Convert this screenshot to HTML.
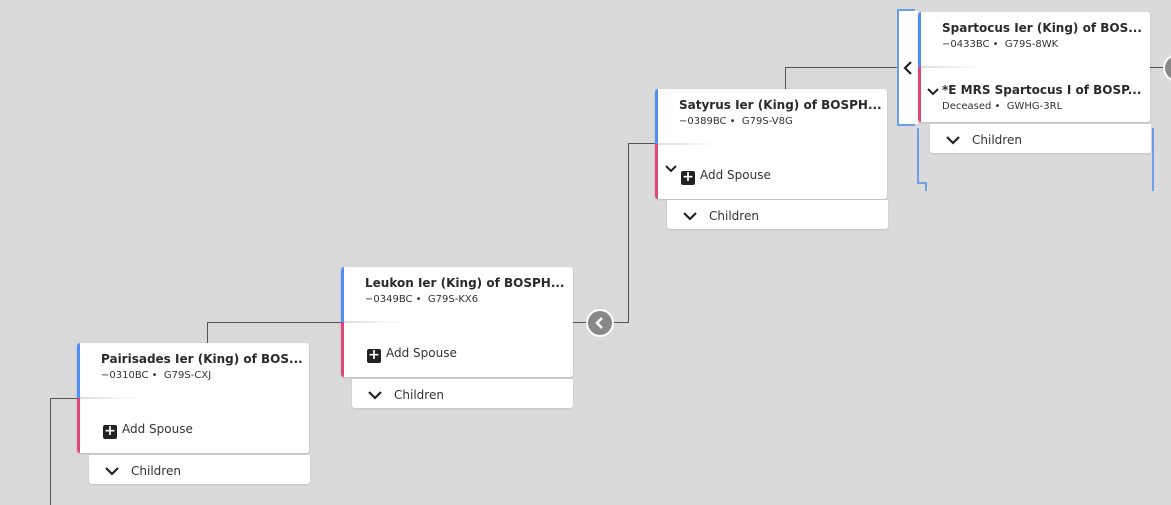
<!DOCTYPE html>
<html><head><style>
body{margin:0;width:1171px;height:505px;background:#dadada;position:relative;overflow:hidden;font-family:"DejaVu Sans","Liberation Sans",sans-serif;color:#333}
.a{position:absolute}
.card{position:absolute;width:232px;height:110px;background:#fff;border-radius:3px;box-shadow:0 1px 2px rgba(0,0,0,.15)}
.card .b{position:absolute;left:0;top:0;width:3px;height:55px;background:#4d8ff5;border-radius:3px 0 0 0}
.card .p{position:absolute;left:0;top:55px;width:3px;height:55px;background:#e0457b;border-radius:0 0 0 3px}
.card .sep{position:absolute;left:3px;top:54px;width:60px;height:2px;background:linear-gradient(90deg,#ddd,#fff)}
.nm{position:absolute;left:24px;top:9px;font-size:12px;font-weight:bold;color:#2a2a2a;white-space:nowrap}
.sub{position:absolute;left:24px;top:27px;font-size:10px;color:#333;white-space:nowrap}
.add{position:absolute;left:26px;top:79px;font-size:12px;white-space:nowrap}
.plus{display:inline-block;width:14px;height:14px;background:#222;color:#fff;border-radius:2px;font-size:14px;line-height:13px;text-align:center;font-weight:bold;vertical-align:-2px;margin-right:5px}
.ch{position:absolute;width:221px;height:29px;background:#fff;border-radius:0 0 3px 3px;font-size:12px;box-shadow:0 1px 2px rgba(0,0,0,.1)}
.ch svg{position:absolute;left:16px;top:12px}
.ch span{position:absolute;left:42px;top:9px}
.ln{position:absolute;background:#555}
.circ{position:absolute;width:24px;height:24px;border-radius:50%;background:#888;border:2px solid #fff;box-sizing:content-box}
.bl{position:absolute;background:#6d9ee8}
</style></head><body>
<div class="ln" style="left:50px;top:398px;width:1px;height:107px"></div>
<div class="ln" style="left:50px;top:398px;width:28px;height:1px"></div>
<div class="ln" style="left:207px;top:322px;width:1px;height:22px"></div>
<div class="ln" style="left:207px;top:322px;width:135px;height:1px"></div>
<div class="ln" style="left:573px;top:322px;width:55px;height:1px"></div>
<div class="ln" style="left:628px;top:143px;width:1px;height:180px"></div>
<div class="ln" style="left:628px;top:143px;width:28px;height:1px"></div>
<div class="ln" style="left:785px;top:67px;width:1px;height:23px"></div>
<div class="ln" style="left:785px;top:67px;width:114px;height:1px"></div>
<div class="ln" style="left:1150px;top:67px;width:20px;height:1px"></div>

<div class="circ" style="left:586px;top:309px"><svg width="24" height="24"><path d="M14 7 L9 12 L14 17" stroke="#fff" stroke-width="2.5" fill="none"/></svg></div>
<div class="circ" style="left:1163px;top:54px"></div>

<div class="bl" style="left:897px;top:9px;width:2px;height:117px"></div>
<div class="bl" style="left:897px;top:9px;width:18px;height:2px"></div>
<div class="bl" style="left:897px;top:124px;width:18px;height:2px"></div>
<div class="a" style="left:899px;top:11px;width:19px;height:113px;background:#fff"></div>
<svg class="a" style="left:902px;top:60px" width="12" height="16"><path d="M9 2 L3 8 L9 14" stroke="#222" stroke-width="2.2" fill="none"/></svg>
<div class="bl" style="left:917px;top:128px;width:2px;height:56px"></div>
<div class="bl" style="left:917px;top:182px;width:10px;height:2px"></div>
<div class="bl" style="left:925px;top:182px;width:2px;height:9px"></div>
<div class="bl" style="left:1152px;top:128px;width:2px;height:63px"></div>

<div class="card" style="left:77px;top:343px"><div class="b"></div><div class="p"></div><div class="sep"></div>
<div class="nm">Pairisades Ier (King) of BOS...</div><div class="sub">−0310BC •&nbsp; G79S-CXJ</div>
<div class="add"><span class="plus">+</span>Add Spouse</div></div>
<div class="ch" style="left:89px;top:455px"><svg width="14" height="9"><path d="M1 1 L7 7 L13 1" stroke="#222" stroke-width="2.2" fill="none"/></svg><span>Children</span></div>

<div class="card" style="left:341px;top:267px"><div class="b"></div><div class="p"></div><div class="sep"></div>
<div class="nm">Leukon Ier (King) of BOSPH...</div><div class="sub">−0349BC •&nbsp; G79S-KX6</div>
<div class="add"><span class="plus">+</span>Add Spouse</div></div>
<div class="ch" style="left:352px;top:379px"><svg width="14" height="9"><path d="M1 1 L7 7 L13 1" stroke="#222" stroke-width="2.2" fill="none"/></svg><span>Children</span></div>

<div class="card" style="left:655px;top:89px"><div class="b"></div><div class="p"></div><div class="sep"></div>
<div class="nm">Satyrus Ier (King) of BOSPH...</div><div class="sub">−0389BC •&nbsp; G79S-V8G</div>
<svg class="a" style="left:10px;top:76px" width="12" height="8"><path d="M1 1 L6 6 L11 1" stroke="#222" stroke-width="2" fill="none"/></svg>
<div class="add"><span class="plus">+</span>Add Spouse</div></div>
<div class="ch" style="left:667px;top:200px"><svg width="14" height="9"><path d="M1 1 L7 7 L13 1" stroke="#222" stroke-width="2.2" fill="none"/></svg><span>Children</span></div>

<div class="card" style="left:918px;top:12px"><div class="b"></div><div class="p"></div><div class="sep"></div>
<div class="nm">Spartocus Ier (King) of BOS...</div><div class="sub">−0433BC •&nbsp; G79S-8WK</div>
<svg class="a" style="left:9px;top:76px" width="12" height="8"><path d="M1 1 L6 6 L11 1" stroke="#222" stroke-width="2" fill="none"/></svg>
<div class="nm" style="top:71px">*E MRS Spartocus I of BOSP...</div><div class="sub" style="top:89px">Deceased •&nbsp; GWHG-3RL</div></div>
<div class="ch" style="left:930px;top:124px"><svg width="14" height="9"><path d="M1 1 L7 7 L13 1" stroke="#222" stroke-width="2.2" fill="none"/></svg><span>Children</span></div>
</body></html>
